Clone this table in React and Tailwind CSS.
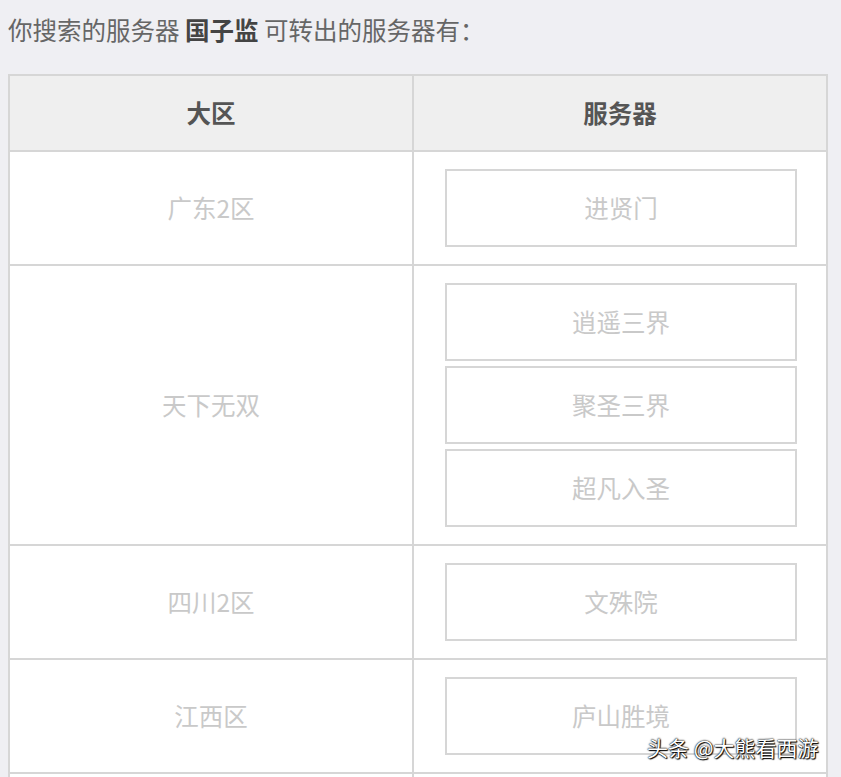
import React from "react";

const rows = [
  { area: "广东2区", servers: ["进贤门"] },
  { area: "天下无双", servers: ["逍遥三界", "聚圣三界", "超凡入圣"] },
  { area: "四川2区", servers: ["文殊院"] },
  { area: "江西区", servers: ["庐山胜境"] },
  { area: "", servers: [""] },
];

export default function App() {
  return (
    <div className="relative h-[777px] overflow-hidden bg-[#efeff3] font-['Noto_Sans_CJK_SC','Noto_Sans',sans-serif]">
      <div className="pl-2 pt-3 text-[24.5px] leading-[36px] text-[#666666]">
        你搜索的服务器 <span className="font-bold text-[#444444]">国子监</span> 可转出的服务器有：
      </div>
      <div className="ml-2 mt-[26px] w-[820px] border-2 border-[#d6d6d6] bg-white">
        <div className="flex h-[76px] border-b-2 border-[#d6d6d6] bg-[#efefef] text-[24.5px] font-bold text-[#555555]">
          <div className="flex w-[404px] items-center justify-center border-r-2 border-[#d6d6d6]">大区</div>
          <div className="flex flex-1 items-center justify-center">服务器</div>
        </div>
        {rows.map((r, i) => (
          <div key={i} className="flex border-b-2 border-[#d6d6d6] text-[24.5px] text-[#c9c9c9]">
            <div className="flex w-[404px] items-center justify-center border-r-2 border-[#d6d6d6]">{r.area}</div>
            <div className="flex flex-1 flex-col gap-[5px] py-[17px] pl-[31px] pr-[29px]">
              {r.servers.map((s, j) => (
                <div key={j} className="flex h-[78px] items-center justify-center border-2 border-[#d6d6d6]">
                  {s}
                </div>
              ))}
            </div>
          </div>
        ))}
      </div>
      <div className="absolute left-[647px] top-[732px] text-[21px] leading-[30px] text-white [text-shadow:0_0_2px_#000,0_0_1px_#000,1px_1px_1px_#000]">
        头条 @大熊看西游
      </div>
    </div>
  );
}
